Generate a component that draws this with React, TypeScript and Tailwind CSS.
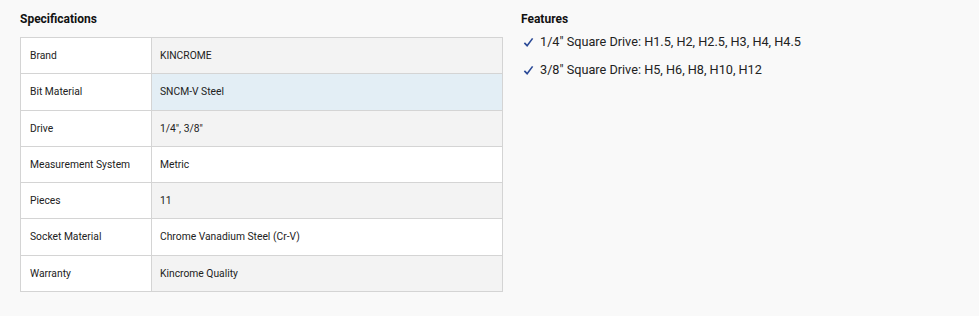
const SPECS = [
  { label: 'Brand', value: 'KINCROME', bg: 'bg-[#f3f3f3]' },
  { label: 'Bit Material', value: 'SNCM-V Steel', bg: 'bg-[#e3eef5]' },
  { label: 'Drive', value: '1/4", 3/8"', bg: 'bg-[#f3f3f3]' },
  { label: 'Measurement System', value: 'Metric', bg: 'bg-white' },
  { label: 'Pieces', value: '11', bg: 'bg-[#f3f3f3]' },
  { label: 'Socket Material', value: 'Chrome Vanadium Steel (Cr-V)', bg: 'bg-white' },
  { label: 'Warranty', value: 'Kincrome Quality', bg: 'bg-[#f3f3f3]' },
];

const FEATURES = [
  '1/4" Square Drive: H1.5, H2, H2.5, H3, H4, H4.5',
  '3/8" Square Drive: H5, H6, H8, H10, H12',
];

export default function App() {
  return (
    <main
      className="w-[979px] h-[316px] bg-[#f9f9f9] flex gap-[18px] pl-[20px] pt-[12px] text-[#222]"
      style={{ fontFamily: 'Roboto, "Liberation Sans", sans-serif' }}
    >
      <section className="w-[483px]">
        <h2 className="text-[12px] font-bold text-[#111] leading-[14px] mb-[11px]">Specifications</h2>
        <div className="border border-[#d4d4d4] border-b-0">
          {SPECS.map((row) => (
            <div key={row.label} className="flex h-[36.3px] border-b border-[#d4d4d4]">
              <div className="w-[131px] bg-white border-r border-[#d4d4d4] flex items-center pl-[9px] text-[10.3px]">
                {row.label}
              </div>
              <div className={`flex-1 ${row.bg} flex items-center pl-[8px] text-[10.3px]`}>{row.value}</div>
            </div>
          ))}
        </div>
      </section>

      <section>
        <h2 className="text-[12px] font-bold text-[#111] leading-[14px] mb-[7px]">Features</h2>
        <ul className="flex flex-col gap-[10px]">
          {FEATURES.map((f) => (
            <li key={f} className="flex items-center gap-[6px] text-[12.7px] leading-[18px]">
              <svg width="11" height="11" viewBox="0 0 12 12" className="shrink-0 ml-[2px]">
                <path d="M1.5 6.5 L4.5 9.5 L10.5 1.5" fill="none" stroke="#2b4a97" strokeWidth="1.8" />
              </svg>
              <span>{f}</span>
            </li>
          ))}
        </ul>
      </section>
    </main>
  );
}
